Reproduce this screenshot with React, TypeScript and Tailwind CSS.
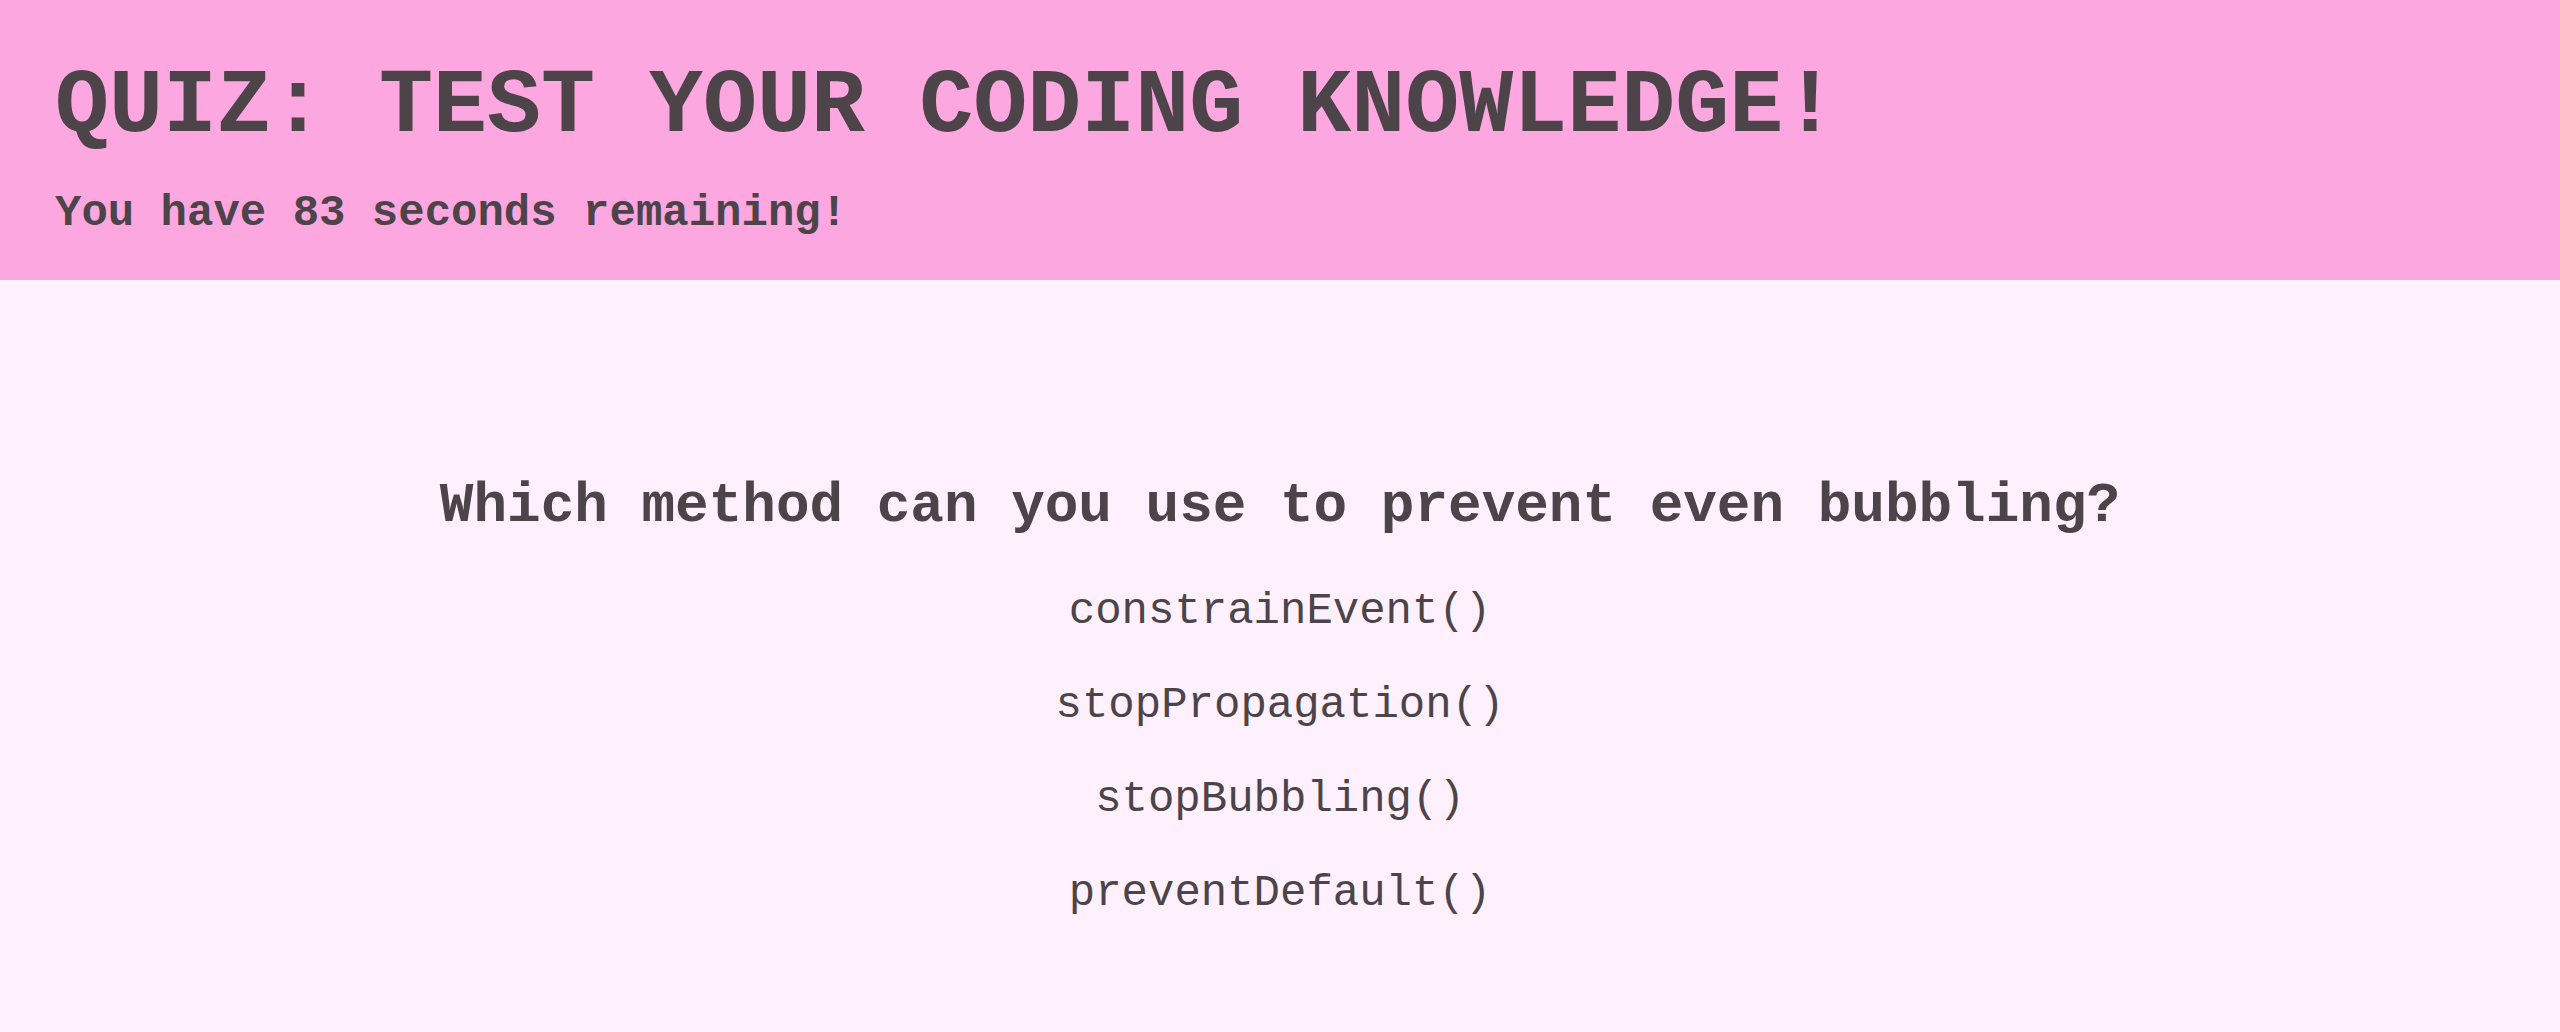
import React from "react";

const options = ["constrainEvent()", "stopPropagation()", "stopBubbling()", "preventDefault()"];

export default function App() {
  return (
    <div
      className="min-h-[1032px] w-full bg-[#fff0fd] text-[#4c4449]"
      style={{ fontFamily: '"Courier New", "Nimbus Mono PS", "Nimbus Mono L", Courier, FreeMono, "Liberation Mono", monospace' }}
    >
      <header className="h-[280px] bg-[#fda7e0] pl-[55px] pt-[62px]">
        <h1 className="text-[90px] font-bold leading-none">QUIZ: TEST YOUR CODING KNOWLEDGE!</h1>
        <p className="mt-[39px] text-[44px] font-bold leading-none">You have 83 seconds remaining!</p>
      </header>
      <main className="flex flex-col items-center pt-[198px]">
        <h2 className="text-[56px] font-bold leading-none">Which method can you use to prevent even bubbling?</h2>
        <ul className="mt-[55px] flex flex-col items-center gap-[50px]">
          {options.map((o) => (
            <li key={o} className="text-[44px] leading-none">
              {o}
            </li>
          ))}
        </ul>
      </main>
    </div>
  );
}
